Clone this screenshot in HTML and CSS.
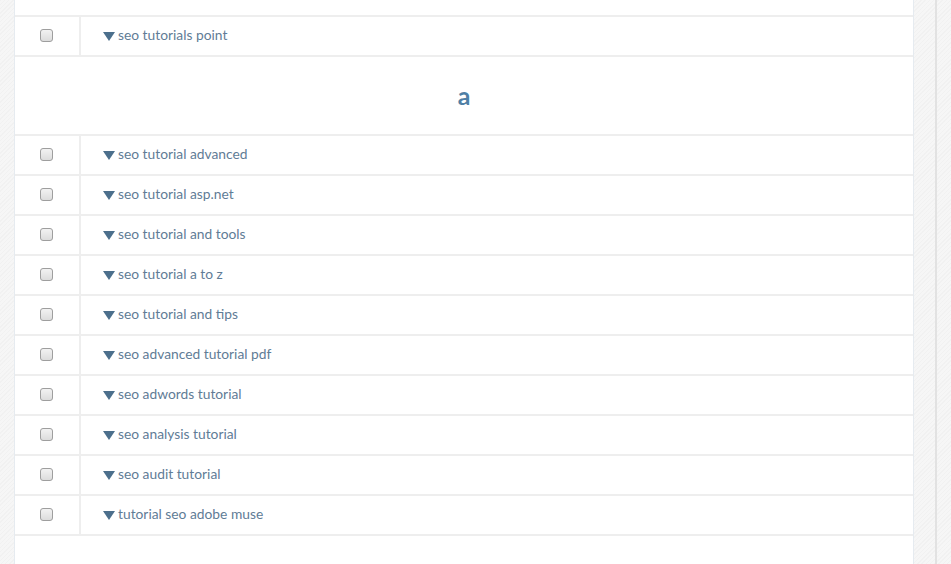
FILE: index.html
```html
<!DOCTYPE html>
<html lang="en">
<head>
    <meta charset="UTF-8">
    <meta name="viewport" content="width=device-width, initial-scale=1.0">
    <title>SEO Tutorial Keywords</title>
    <link rel="stylesheet" href="styles.css">
</head>
<body>
    <div class="page">
        <div class="panel">
            <table class="keywords">
                <tr class="spacer"><td colspan="2"></td></tr>
                <tr>
                    <td class="check"><input type="checkbox"></td>
                    <td class="term"><span class="caret"></span>seo tutorials point</td>
                </tr>
                <tr class="letter"><td colspan="2">a</td></tr>
                <tr>
                    <td class="check"><input type="checkbox"></td>
                    <td class="term"><span class="caret"></span>seo tutorial advanced</td>
                </tr>
                <tr>
                    <td class="check"><input type="checkbox"></td>
                    <td class="term"><span class="caret"></span>seo tutorial asp.net</td>
                </tr>
                <tr>
                    <td class="check"><input type="checkbox"></td>
                    <td class="term"><span class="caret"></span>seo tutorial and tools</td>
                </tr>
                <tr>
                    <td class="check"><input type="checkbox"></td>
                    <td class="term"><span class="caret"></span>seo tutorial a to z</td>
                </tr>
                <tr>
                    <td class="check"><input type="checkbox"></td>
                    <td class="term"><span class="caret"></span>seo tutorial and tips</td>
                </tr>
                <tr>
                    <td class="check"><input type="checkbox"></td>
                    <td class="term"><span class="caret"></span>seo advanced tutorial pdf</td>
                </tr>
                <tr>
                    <td class="check"><input type="checkbox"></td>
                    <td class="term"><span class="caret"></span>seo adwords tutorial</td>
                </tr>
                <tr>
                    <td class="check"><input type="checkbox"></td>
                    <td class="term"><span class="caret"></span>seo analysis tutorial</td>
                </tr>
                <tr>
                    <td class="check"><input type="checkbox"></td>
                    <td class="term"><span class="caret"></span>seo audit tutorial</td>
                </tr>
                <tr>
                    <td class="check"><input type="checkbox"></td>
                    <td class="term"><span class="caret"></span>tutorial seo adobe muse</td>
                </tr>
                <tr class="spacer"><td colspan="2"></td></tr>
            </table>
        </div>
        <div class="rail"></div>
    </div>
</body>
</html>
```

FILE: styles.css
```css
html, body {
    height: 100%;
}

body {
    margin: 0;
    font-family: Lato, 'Open Sans', Arial, sans-serif;
    color: #5f7c96;
    background-color: #f6f6f6;
    background-image: repeating-linear-gradient(135deg, rgba(0, 0, 0, 0.018) 0 1px, transparent 1px 3px);
    overflow: hidden;
}

.page {
    display: flex;
    height: 100%;
    padding-left: 14px;
}

.panel {
    width: 898px;
    background: #fff;
    border-left: 1px solid #e6ebf0;
    border-right: 1px solid #e6ebf0;
    flex-shrink: 0;
}

.rail {
    width: 2px;
    margin-left: 21px;
    background: #e2e2e2;
}

.keywords {
    width: 100%;
    border-collapse: collapse;
    margin-top: -25px;
}

.keywords td {
    border-top: 2px solid #eeeeee;
    border-bottom: 2px solid #eeeeee;
    height: 36px;
    padding: 0 0 2px 0;
}

.keywords .check {
    width: 64px;
    border-right: 2px solid #eeeeee;
}

.keywords .check input {
    appearance: none;
    -webkit-appearance: none;
    display: block;
    margin: 0 0 0 25px;
    width: 13px;
    height: 13px;
    box-sizing: border-box;
    border: 1px solid #9e9e9e;
    border-radius: 3px;
    background: linear-gradient(#f2f2f2, #dcdcdc);
}

.keywords .term {
    height: 35px;
    padding-bottom: 3px;
    padding-left: 22px;
    font-size: 13.8px;
}

.caret {
    display: inline-block;
    width: 0;
    height: 0;
    border-left: 6px solid transparent;
    border-right: 6px solid transparent;
    border-top: 9px solid #4c6f8c;
    margin-right: 3px;
    vertical-align: -1px;
}

.letter td {
    height: 75px;
    text-align: center;
    font-size: 25px;
    font-weight: bold;
    color: #4f7fa5;
}
```
